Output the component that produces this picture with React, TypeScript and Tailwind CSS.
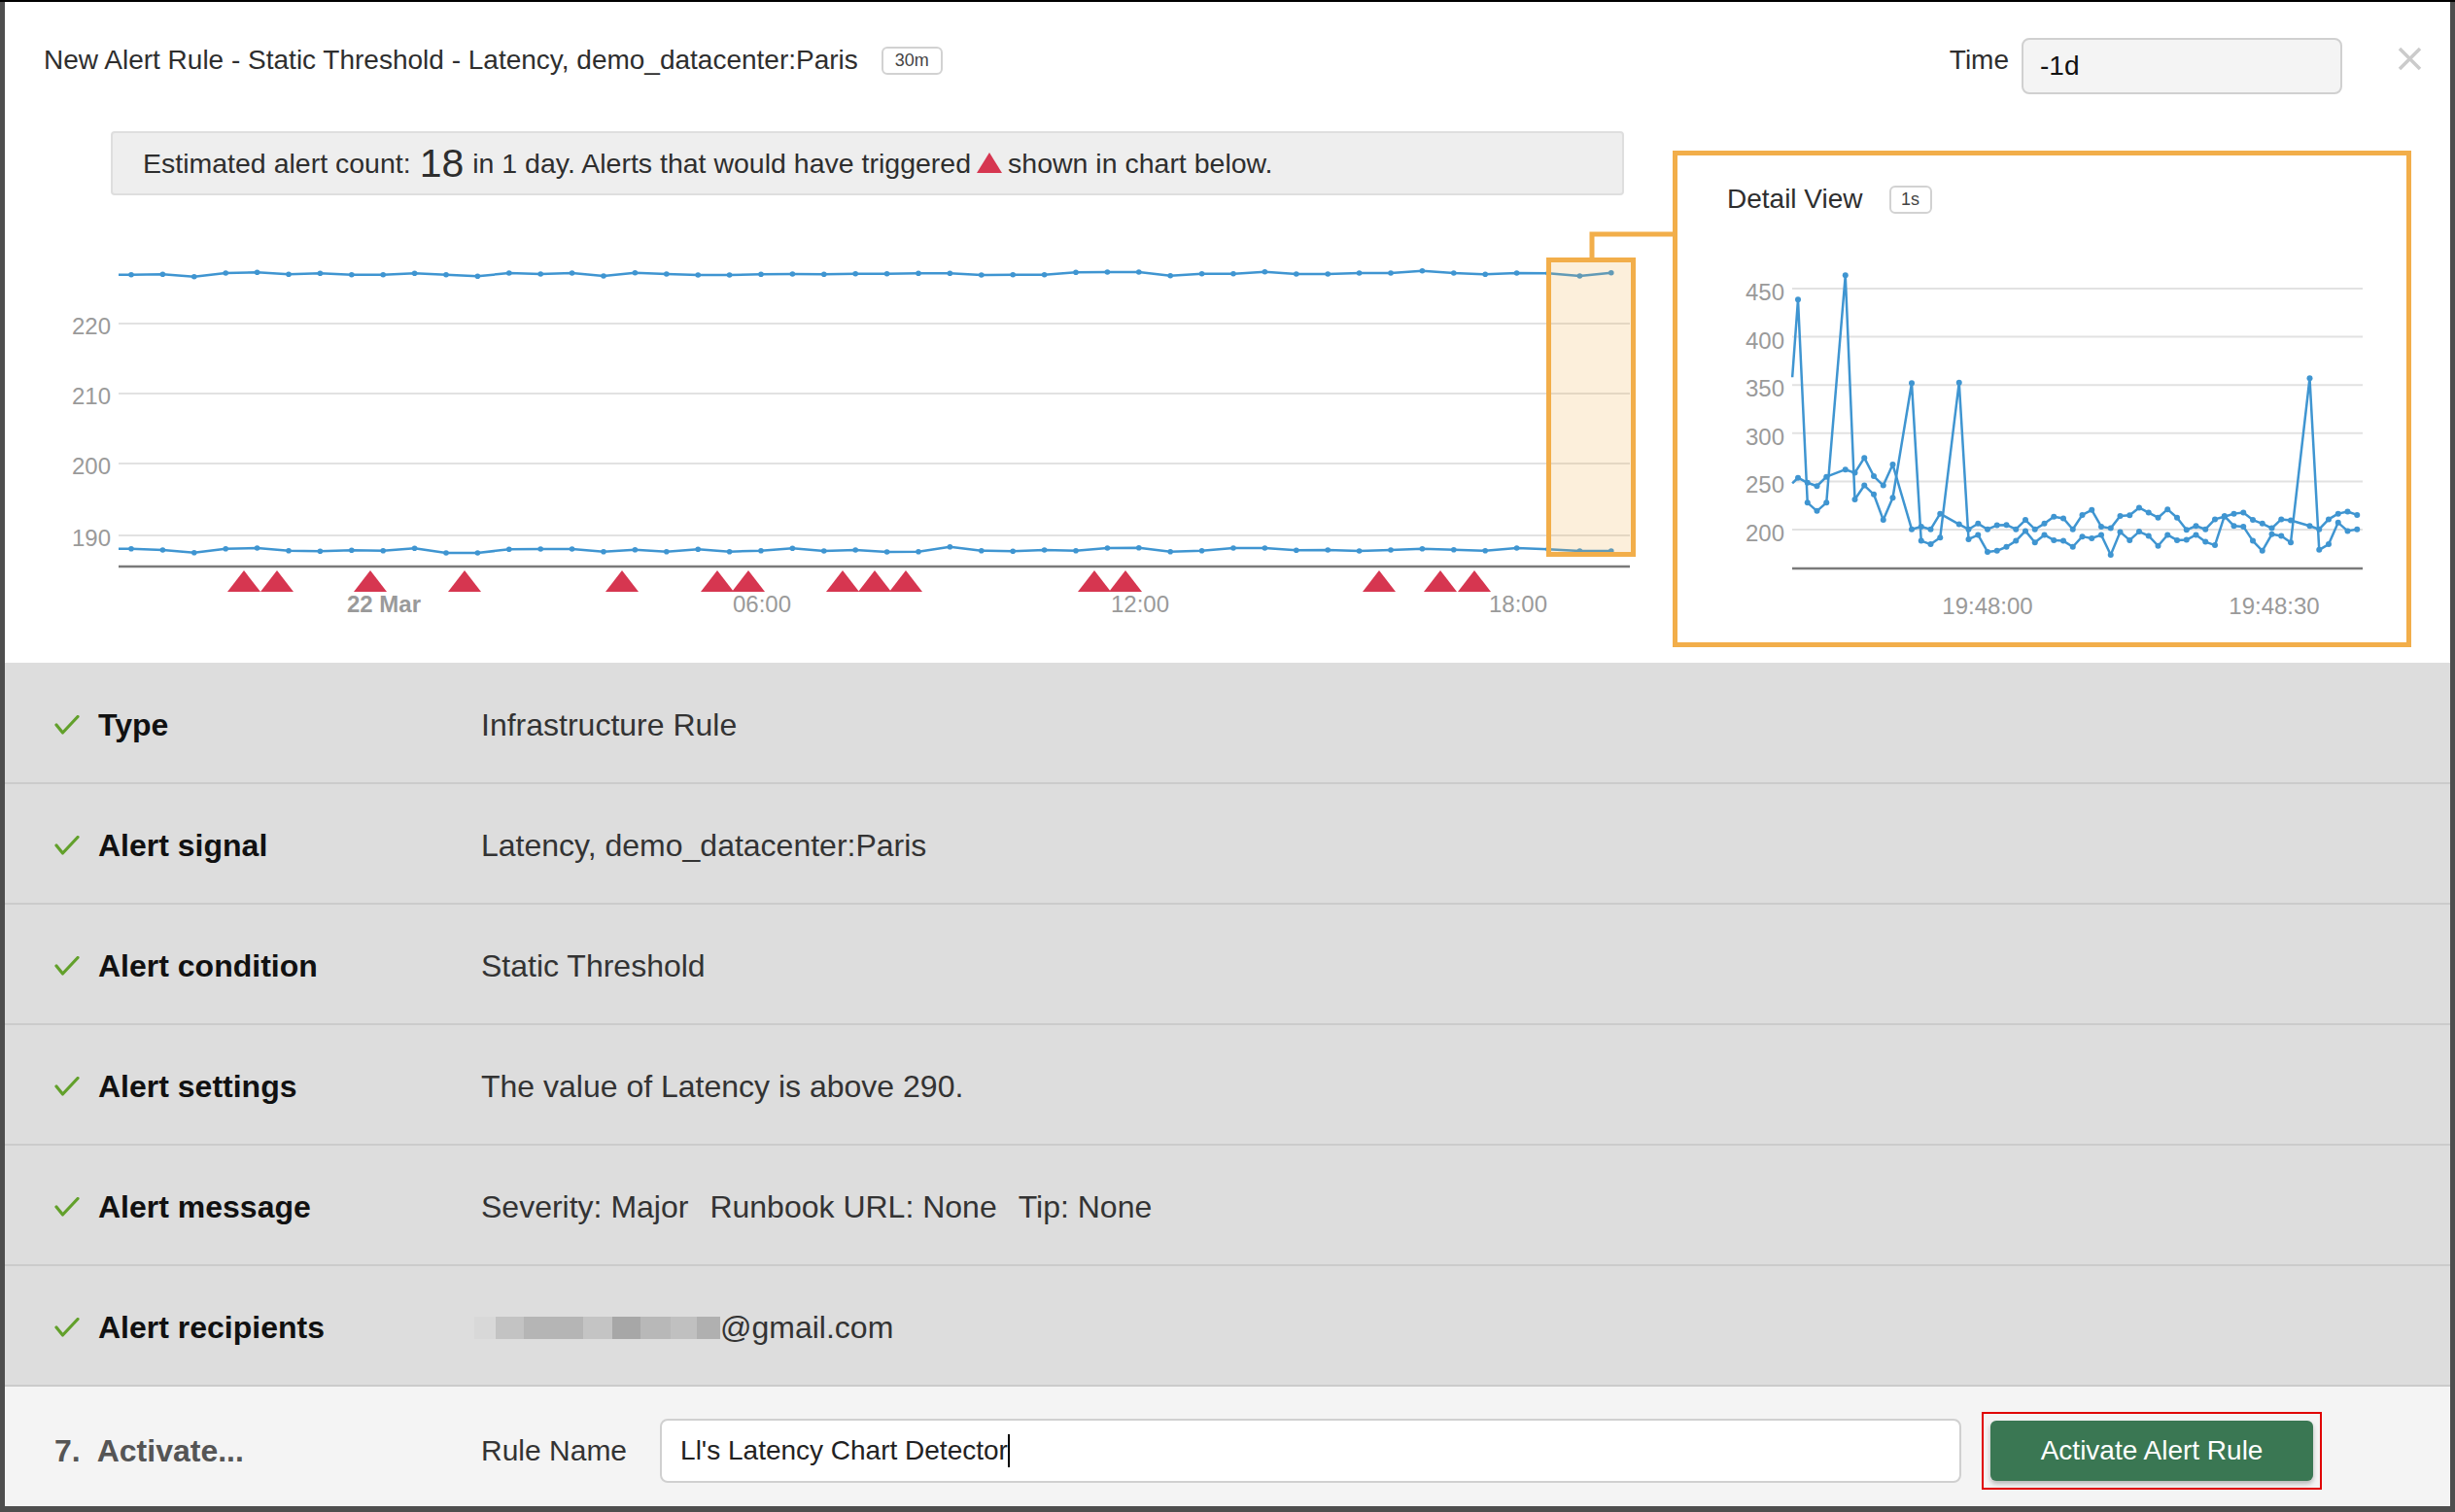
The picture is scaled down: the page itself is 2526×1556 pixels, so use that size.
import React from 'react';

// main chart, y positions in page px (two series, 30 min buckets over 1 day)
const upper = [
  282.7, 282.3, 284.7, 281, 280.3, 282.3, 281.3, 282.7, 282.7, 281.3, 282.7, 284.3, 281, 282, 281, 284,
  280.7, 282, 283, 283, 282.3, 282, 282.3, 281.7, 281.7, 281.3, 281.3, 283, 282.7, 282.7, 280.3, 280,
  280, 283.7, 281.7, 281.7, 279.7, 282, 282, 281, 281, 278.7, 281, 282.3, 281, 281.3, 284, 280.7,
];
const lower = [
  564.7, 566, 568.7, 564.7, 564, 566.7, 567.3, 566.3, 566.7, 564.3, 569, 569, 565.3, 565, 565, 567.7,
  565.7, 567.7, 565.3, 567.7, 566.7, 564.3, 567, 566, 568, 567.7, 562.7, 566.7, 567.3, 566, 566.7, 564,
  563.7, 567.7, 566.7, 564, 564, 566.3, 566, 567, 566, 564.7, 565.7, 566.7, 564, 565.3, 567, 567,
];
const alerts = [251, 285, 381, 478, 640, 738, 770, 867, 900, 932, 1126, 1158, 1419, 1482, 1517];

const mainGrid = [
  { label: '220', y: 132 },
  { label: '210', y: 204 },
  { label: '200', y: 276 },
  { label: '190', y: 350 },
];

const mainTicks = [
  { label: '22 Mar', x: 390, bold: true },
  { label: '06:00', x: 779, bold: false },
  { label: '12:00', x: 1168, bold: false },
  { label: '18:00', x: 1557, bold: false },
];

// detail view: [index, latency]
const seriesA: [number, number][] = [
  [-0.6, 358], [0, 438.6], [1, 227.9], [2, 219.3], [3, 227.9], [5, 463.8], [6, 231.3], [7, 245.8], [8, 236.5],
  [9, 210], [10, 233], [12, 351.9], [13, 188.3], [14, 184.8], [15, 191.7], [17, 352.5], [18, 190], [19, 194.5],
  [20, 176.9], [21, 178], [22, 182.1], [23, 188.3], [24, 198.6], [25, 186.6], [26, 194.5], [27, 189], [28, 188.3],
  [29, 182.1], [30, 192.8], [31, 191], [32, 194.5], [33, 173.8], [34, 197.6], [35, 189], [36, 197.9], [37, 193.5],
  [38, 183.1], [39, 194.5], [40, 189], [41, 189.3], [42, 194.5], [43, 187.3], [44, 183.8], [45, 214.1], [46, 203.8],
  [47, 203.1], [48, 188.3], [49, 178], [50, 195.2], [51, 193.5], [52, 186.6], [54, 357], [55, 179], [56, 184.8],
  [57, 207.2], [58, 198.6], [59, 200.3],
];
const seriesB: [number, number][] = [
  [-0.6, 248], [0, 253.7], [1, 248.6], [2, 245.1], [3, 254.8], [5, 262.3], [6, 258.9], [7, 274.4], [8, 255.4],
  [9, 245.8], [10, 267.5], [12, 200.3], [13, 203.1], [14, 200.3], [15, 216.5], [17, 205.5], [18, 200.3], [19, 206.2],
  [20, 200.3], [21, 204.5], [22, 204.8], [23, 200.3], [24, 210], [25, 200.3], [26, 206.2], [27, 213.4], [28, 211.7],
  [29, 200.3], [30, 215.2], [31, 220.3], [32, 203.1], [33, 201.4], [34, 214.1], [35, 214.8], [36, 222.7], [37, 217.6],
  [38, 212.4], [39, 221], [40, 212.4], [41, 199.7], [42, 203.8], [43, 200.3], [44, 210.7], [45, 213.4], [46, 216.5],
  [47, 217.6], [48, 210], [49, 206.2], [50, 201.4], [51, 210.7], [52, 209.6], [54, 203.8], [55, 200.3], [56, 210.7],
  [57, 216.5], [58, 218.6], [59, 215.2],
];

const BLUE = '#3f95d1';
const ORANGE = '#f2ae4a';
const LABEL_FONT = 'Liberation Sans, Arial, sans-serif';

const MainChart = () => {
  const px = (i: number) => 130 + i * 32.4;
  // line runs in from the plot's left edge
  const points = (ys: number[]) =>
    [`117,${ys[0] - 201}`, ...ys.map((y, i) => `${px(i)},${y - 201}`)].join(' ');

  return (
    <svg width="1716" height="481" className="block" fontFamily={LABEL_FONT}>
      {mainGrid.map((g) => (
        <g key={g.label}>
          <line x1={117} x2={1672} y1={g.y} y2={g.y} stroke="#e2e2e2" strokeWidth={2} />
          <text x={109} y={g.y + 11} textAnchor="end" fontSize={24} fill="#9a9a9a">
            {g.label}
          </text>
        </g>
      ))}

      {[upper, lower].map((ys, s) => (
        <g key={s}>
          <polyline points={points(ys)} fill="none" stroke={BLUE} strokeWidth={2.5} strokeLinejoin="round" />
          {ys.map((y, i) => (
            <circle key={i} cx={px(i)} cy={y - 201} r={2.8} fill={BLUE} />
          ))}
        </g>
      ))}

      <line x1={117} x2={1672} y1={382} y2={382} stroke="#7a7a7a" strokeWidth={2.5} />

      {alerts.map((a, i) => {
        const cx = a - 5;
        return <polygon key={i} points={`${cx - 17},408 ${cx},386 ${cx + 17},408`} fill="#d63650" />;
      })}

      {mainTicks.map((t) => (
        <text
          key={t.label}
          x={t.x}
          y={429}
          textAnchor="middle"
          fontSize={24}
          fontWeight={t.bold ? 700 : 400}
          fill="#9a9a9a"
        >
          {t.label}
        </text>
      ))}

      {/* zoomed window + connector to the detail view */}
      <rect x={1588.5} y={66.5} width={87} height={303} fill="rgba(242,174,74,0.2)" stroke={ORANGE} strokeWidth={5} />
      <polyline points="1633,66 1633,40 1716,40" fill="none" stroke={ORANGE} strokeWidth={5} />
    </svg>
  );
};

const DetailChart = () => {
  const px = (i: number) => 124 + i * 9.75;
  const py = (v: number) => 315 - (v - 200) * 0.992;
  const grid = [450, 400, 350, 300, 250, 200];

  return (
    <svg width="750" height="432" className="block" fontFamily={LABEL_FONT}>
      {grid.map((v) => (
        <g key={v}>
          <line x1={118} x2={705} y1={py(v)} y2={py(v)} stroke="#e2e2e2" strokeWidth={2} />
          <text x={110} y={py(v) + 12} textAnchor="end" fontSize={24} fill="#9a9a9a">
            {v}
          </text>
        </g>
      ))}

      {[seriesA, seriesB].map((s, k) => (
        <g key={k}>
          <polyline
            points={s.map(([i, v]) => `${px(i)},${py(v)}`).join(' ')}
            fill="none"
            stroke={BLUE}
            strokeWidth={2.5}
            strokeLinejoin="round"
          />
          {s
            .filter(([i]) => i >= 0)
            .map(([i, v]) => (
              <circle key={i} cx={px(i)} cy={py(v)} r={3} fill={BLUE} />
            ))}
        </g>
      ))}

      <line x1={118} x2={705} y1={355} y2={355} stroke="#7a7a7a" strokeWidth={2.5} />
      <text x={319} y={402} textAnchor="middle" fontSize={24} fill="#9a9a9a">
        19:48:00
      </text>
      <text x={614} y={402} textAnchor="middle" fontSize={24} fill="#9a9a9a">
        19:48:30
      </text>
    </svg>
  );
};

const Check = () => (
  <svg width="26" height="20" viewBox="0 0 26 20" className="shrink-0">
    <polyline points="2,10 8.5,18 24,1.5" fill="none" stroke="#62a02b" strokeWidth={3.2} strokeLinecap="round" strokeLinejoin="round" />
  </svg>
);

const blurBlocks = [
  { w: 22, c: 'bg-[#d8d8d8]' },
  { w: 29, c: 'bg-[#c3c3c3]' },
  { w: 61, c: 'bg-[#b5b5b5]' },
  { w: 30, c: 'bg-[#c4c4c4]' },
  { w: 29, c: 'bg-[#a7a7a7]' },
  { w: 31, c: 'bg-[#b8b8b8]' },
  { w: 27, c: 'bg-[#c0c0c0]' },
  { w: 24, c: 'bg-[#b0b0b0]' },
];

const rows: { label: string; value: React.ReactNode }[] = [
  { label: 'Type', value: 'Infrastructure Rule' },
  { label: 'Alert signal', value: 'Latency, demo_datacenter:Paris' },
  { label: 'Alert condition', value: 'Static Threshold' },
  { label: 'Alert settings', value: 'The value of Latency is above 290.' },
  {
    label: 'Alert message',
    value: (
      <span className="flex gap-x-[22px]">
        <span>Severity: Major</span>
        <span>Runbook URL: None</span>
        <span>Tip: None</span>
      </span>
    ),
  },
  {
    label: 'Alert recipients',
    value: (
      <span className="flex items-center">
        <span className="flex h-[23px] ml-[-7px]">
          {blurBlocks.map((b, i) => (
            <span key={i} className={`block h-full ${b.c}`} style={{ width: b.w }} />
          ))}
        </span>
        <span>@gmail.com</span>
      </span>
    ),
  },
];

export default function App() {
  return (
    <div className="w-[2526px] h-[1556px] overflow-hidden bg-[#4e4e4e] border-t-2 border-black pl-[5px] pr-[5px] pb-[6px] font-['Liberation_Sans',Arial,sans-serif]">
      <div className="w-[2516px] h-[1548px] bg-white flex flex-col">
        {/* top: header + charts */}
        <div className="h-[680px] shrink-0 flex flex-col">
          <div className="h-[95px] pt-[37px] flex justify-between items-start">
            <div className="flex items-center h-[34px] mt-[6px] pl-[40px]">
              <h1 className="text-[28px] leading-[34px] text-[#2e2e2e] whitespace-nowrap">
                New Alert Rule - Static Threshold - Latency, demo_datacenter:Paris
              </h1>
              <span className="ml-[24px] w-[63px] h-[29px] border-2 border-[#d2d2d2] rounded-[6px] flex items-center justify-center text-[18px] text-[#444]">
                30m
              </span>
            </div>
            <div className="flex items-start pr-[29px]">
              <span className="mt-[6px] text-[28px] leading-[34px] text-[#2e2e2e] mr-[13px]">Time</span>
              <div className="w-[330px] h-[58px] bg-[#f4f4f4] border-2 border-[#d0d0d0] rounded-[8px] flex items-center pl-[17px] text-[28px] text-[#111]">
                -1d
              </div>
              <svg width="25" height="25" viewBox="0 0 25 25" className="ml-[57px] mt-[9px]">
                <path d="M2 2 L23 23 M23 2 L2 23" stroke="#cbcbcb" strokeWidth={3.5} />
              </svg>
            </div>
          </div>

          <div className="flex">
            <div className="w-[1716px] shrink-0">
              <div className="ml-[109px] mt-[38px] w-[1557px] h-[66px] border-2 border-[#dedede] bg-[#eeeeee] rounded-[4px] flex items-center pl-[31px] text-[28.5px] text-[#2e2e2e] whitespace-nowrap">
                <span>Estimated alert count:</span>
                <span className="text-[41px] leading-none mx-[9px]">18</span>
                <span>in 1 day. Alerts that would have triggered</span>
                <svg width="26" height="21" viewBox="0 0 26 21" className="mx-[6px] mb-[2px]">
                  <polygon points="0,21 13,0 26,21" fill="#d63650" />
                </svg>
                <span>shown in chart below.</span>
              </div>
              <MainChart />
            </div>

            <div className="mt-[58px] w-[760px] h-[511px] shrink-0 border-[5px] border-[#f2ae4a] flex flex-col">
              <div className="mt-[28px] ml-[51px] h-[34px] flex items-center gap-[27px]">
                <span className="text-[28px] leading-[34px] text-[#2e2e2e]">Detail View</span>
                <span className="w-[44px] h-[29px] border-2 border-[#d2d2d2] rounded-[6px] flex items-center justify-center text-[18px] text-[#444]">
                  1s
                </span>
              </div>
              <div className="mt-[8px]">
                <DetailChart />
              </div>
            </div>
          </div>
        </div>

        {/* summary rows */}
        {rows.map((r, i) => (
          <div
            key={r.label}
            className={`${i === 0 ? 'h-[125px]' : 'h-[124px]'} shrink-0 bg-[#dddddd] border-b-2 border-[#cbcbcb] flex items-center pl-[51px] pt-[4px] text-[32px]`}
          >
            <div className="w-[439px] shrink-0 flex items-center">
              <Check />
              <span className="ml-[19px] font-bold text-[#111]">{r.label}</span>
            </div>
            <div className="text-[#333] whitespace-nowrap">{r.value}</div>
          </div>
        ))}

        {/* activate */}
        <div className="flex-1 bg-[#f4f4f4] flex items-center pl-[51px] pt-[8px]">
          <div className="w-[439px] shrink-0 flex items-center text-[32px] font-bold text-[#555]">
            <span>7.</span>
            <span className="ml-[17px]">Activate...</span>
          </div>
          <span className="text-[30px] text-[#333] whitespace-nowrap">Rule Name</span>
          <div className="ml-[34px] w-[1339px] h-[66px] bg-white border-2 border-[#d0d0d0] rounded-[8px] flex items-center pl-[19px] text-[28px] text-[#222]">
            <span className="whitespace-nowrap">Ll's Latency Chart Detector</span>
            <span className="inline-block w-[2px] h-[34px] bg-black" />
          </div>
          <div className="ml-[21px] border-2 border-[#e00000] p-[7px]">
            <button className="w-[332px] h-[62px] bg-[#3a7753] rounded-[6px] shadow-[0_3px_5px_rgba(0,0,0,0.25)] text-white text-[28px]">
              Activate Alert Rule
            </button>
          </div>
        </div>
      </div>
    </div>
  );
}
